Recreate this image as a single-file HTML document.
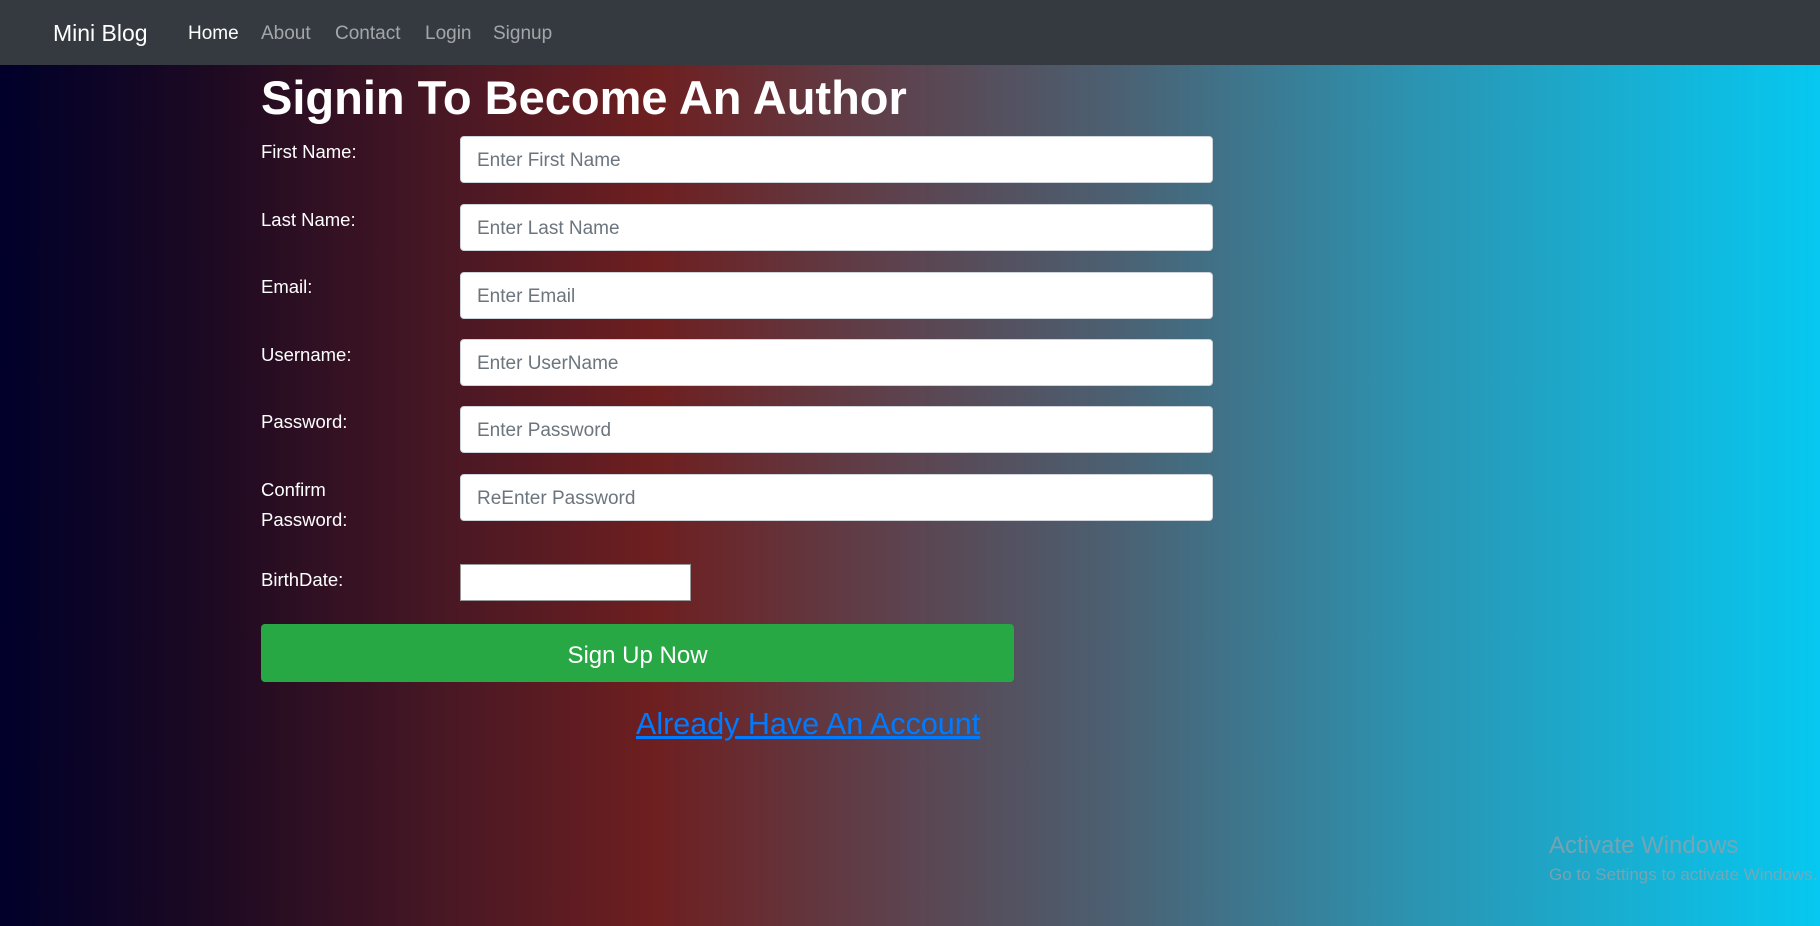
<!DOCTYPE html>
<html><head><meta charset="utf-8"><style>
*{box-sizing:border-box;margin:0;padding:0}
body{width:1820px;height:926px;overflow:hidden;font-family:"Liberation Sans",sans-serif;background:linear-gradient(90deg,#00002a 0%,#1e0a22 12%,#4a1824 25%,#6e1f20 36%,#5c4450 50%,#4a6274 62%,#2b94b2 78%,#06c8f0 100%);position:relative;color:#fff}
.nav{position:absolute;left:0;top:0;width:1820px;height:65px;background:#343a40}
.brand{position:absolute;left:53px;top:20px;font-size:23px;color:#fff}
.nav a{position:absolute;top:23px;font-size:19px;color:rgba(255,255,255,.55);text-decoration:none}
h1{position:absolute;left:261px;top:70px;font-size:47px;font-weight:bold;white-space:nowrap}
.lbl{position:absolute;left:261px;font-size:18.5px;line-height:30px}
.in{position:absolute;left:460px;width:753px;height:47px;background:#fff;border:1px solid #ced4da;border-radius:4px;color:#6c757d;font-size:19px;padding:13px 16px;line-height:22px}
.btn{position:absolute;left:261px;top:624px;width:753px;height:58px;background:#28a745;border-radius:4px;color:#fff;font-size:24px;text-align:center;line-height:63px}
.link{position:absolute;left:636px;top:707px;font-size:30.5px;color:#007bff;text-decoration:underline;white-space:nowrap}
.aw{position:absolute;left:1549px;color:rgba(150,160,170,.75);white-space:nowrap}
</style></head><body>
<div class="nav">
<div class="brand">Mini Blog</div>
<a style="left:188px;color:#fff">Home</a>
<a style="left:261px">About</a>
<a style="left:335px">Contact</a>
<a style="left:425px">Login</a>
<a style="left:493px">Signup</a>
</div>
<h1>Signin To Become An Author</h1>
<div class="lbl" style="top:137px">First Name:</div>
<div class="in" style="top:136px">Enter First Name</div>
<div class="lbl" style="top:205px">Last Name:</div>
<div class="in" style="top:204px">Enter Last Name</div>
<div class="lbl" style="top:272px">Email:</div>
<div class="in" style="top:272px">Enter Email</div>
<div class="lbl" style="top:340px">Username:</div>
<div class="in" style="top:339px">Enter UserName</div>
<div class="lbl" style="top:407px">Password:</div>
<div class="in" style="top:406px">Enter Password</div>
<div class="lbl" style="top:475px">Confirm<br>Password:</div>
<div class="in" style="top:474px">ReEnter Password</div>
<div class="lbl" style="top:565px">BirthDate:</div>
<div style="position:absolute;left:460px;top:564px;width:231px;height:37px;background:#fff;border:1px solid #999"></div>
<div class="btn">Sign Up Now</div>
<div class="link">Already Have An Account</div>
<div class="aw" style="top:832px;font-size:24px">Activate Windows</div>
<div class="aw" style="top:865px;font-size:17px">Go to Settings to activate Windows.</div>
</body></html>
